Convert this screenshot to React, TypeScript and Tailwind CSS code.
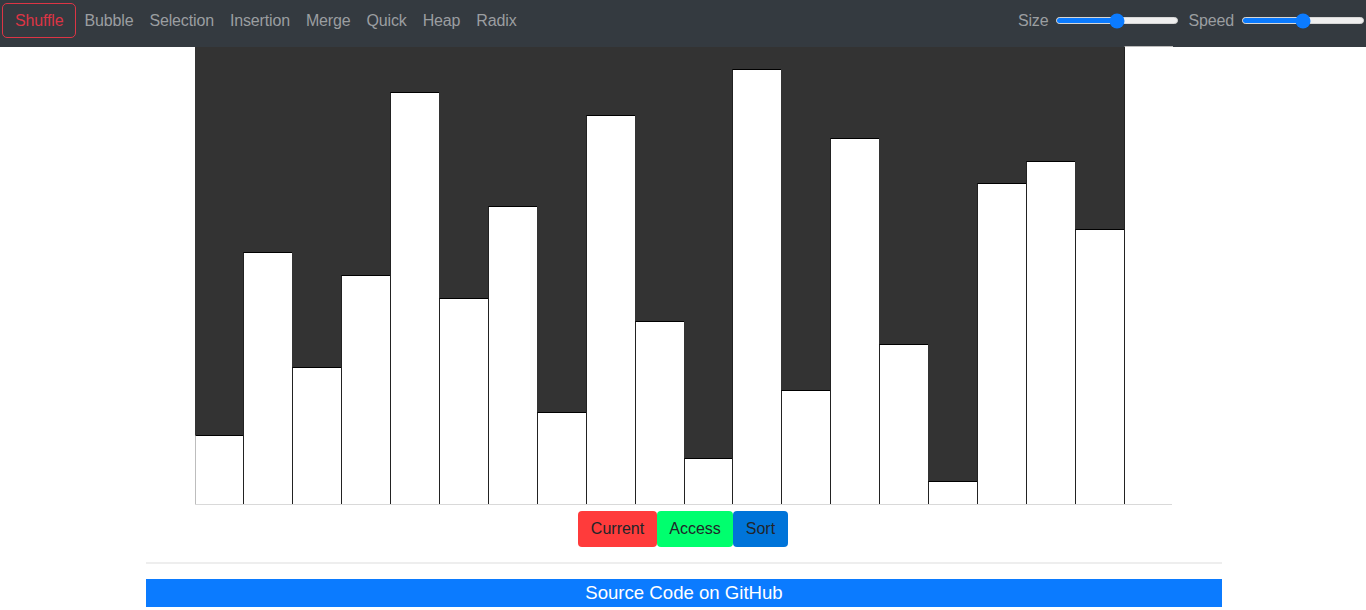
import React from 'react';

const values = [3, 11, 6, 10, 18, 9, 13, 4, 17, 8, 2, 19, 5, 16, 7, 1, 14, 15, 12, 20];
const algorithms = ['Bubble', 'Selection', 'Insertion', 'Merge', 'Quick', 'Heap', 'Radix'];
const CHART_HEIGHT = 458;

function RangeSlider({ percent }: { percent: number }) {
  return (
    <div className="relative h-[7px] w-[122px] rounded-full border border-[#d6d6d6] bg-[#efefef]">
      <div className="h-full rounded-full bg-[#0b7bff]" style={{ width: `${percent}%` }} />
      {/* thumb */}
      <div
        className="absolute top-1/2 h-[15px] w-[15px] -translate-x-1/2 -translate-y-1/2 rounded-full bg-[#0b7bff]"
        style={{ left: `${percent}%` }}
      />
    </div>
  );
}

export default function App() {
  const max = Math.max(...values);

  return (
    <div className="min-h-[610px] bg-white font-['Liberation_Sans',Arial,sans-serif] text-[16px] text-[#212529]">
      {/* Navbar */}
      <nav className="flex h-[47px] items-start justify-between bg-[#343a40] pl-[2px] pr-[2px] pt-[3px] tracking-[-0.15px]">
        <div className="flex items-center">
          <button className="h-[35px] rounded-[5px] border border-[#dc3545] px-3 leading-6 text-[#dc3545]">
            Shuffle
          </button>
          {algorithms.map((name) => (
            <span key={name} className="px-2 leading-[35px] text-[#9b9ea1]">
              {name}
            </span>
          ))}
        </div>
        <div className="flex h-[35px] items-center">
          <span className="mr-2 text-[#9b9ea1]">Size</span>
          <RangeSlider percent={50} />
          <span className="ml-[10px] mr-2 text-[#9b9ea1]">Speed</span>
          <RangeSlider percent={50} />
        </div>
      </nav>

      {/* Chart */}
      <div className="mx-auto flex h-[458px] w-[977px] items-end border-b border-[#d9d9d9] bg-[#333333]">
        {values.map((v, i) => (
          <div
            key={i}
            className={`flex-1 bg-white ${i === 0 ? 'border-l border-l-[#bdbdbd]' : 'border-l border-l-[#222]'} ${
              v === max ? '-mr-px border-t border-t-[#bbbbbb]' : 'border-t border-t-black'
            }`}
            style={{ height: (v / max) * CHART_HEIGHT }}
          />
        ))}
      </div>

      {/* Legend */}
      <div className="mt-[6px] flex justify-center">
        <button className="rounded-[4px] bg-[#ff3b3b] px-[13px] py-1.5 leading-6">Current</button>
        <button className="rounded-[4px] bg-[#00ff6e] px-[12px] py-1.5 leading-6">Access</button>
        <button className="rounded-[4px] bg-[#0074d9] px-[13px] py-1.5 leading-6">Sort</button>
      </div>

      <div className="mx-auto w-[1076px] translate-x-px">
        <hr className="my-[15px] border-t-2 border-[#eeeeee]" />
        <div className="h-[28px] bg-[#0b7bff] text-center text-[18.6px] leading-[28px] text-white">
          Source Code on GitHub
        </div>
      </div>
    </div>
  );
}
